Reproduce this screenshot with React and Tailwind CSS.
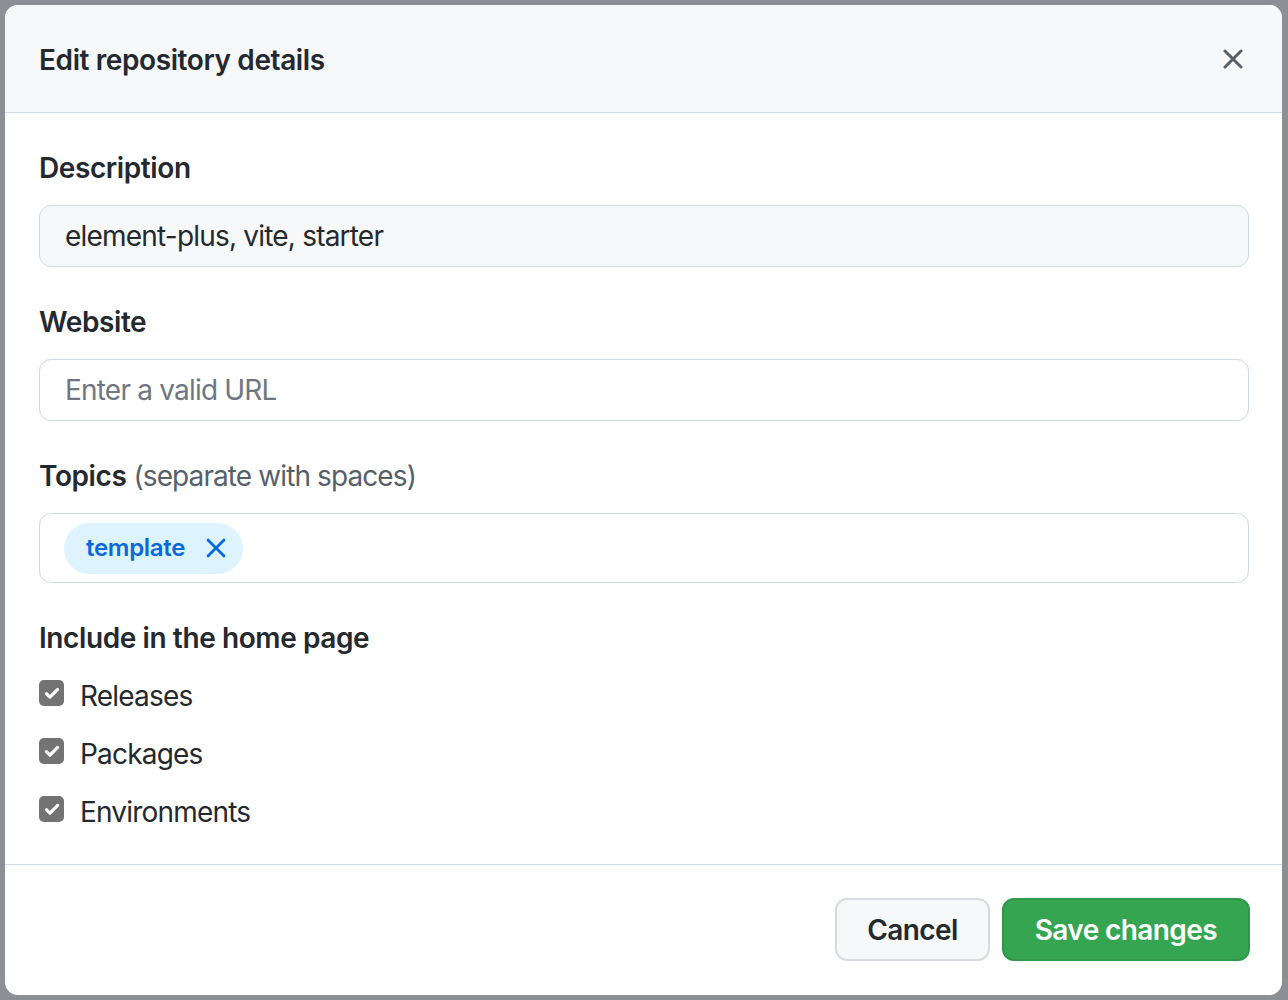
import React from "react";

const font = { fontFamily: "Inter, 'Noto Sans', sans-serif" };

function Check({ label }) {
  return (
    <label className="flex h-[42px] items-center">
      <span className="flex h-[26px] w-[25px] -translate-y-[3px] items-center justify-center rounded-[5px] bg-[#737373]">
        <svg width="18" height="18" viewBox="0 0 16 16" fill="none">
          <path d="M3 8.5l3.2 3.2L13 4.8" stroke="white" strokeWidth="2.8" strokeLinecap="round" strokeLinejoin="round" />
        </svg>
      </span>
      <span className="ml-[16px] text-[28px] tracking-[-0.8px] text-[#24292f]">{label}</span>
    </label>
  );
}

function Label({ children }) {
  return (
    <div className="flex h-[42px] items-center text-[28px] font-semibold tracking-[-0.4px] text-[#24292f]">{children}</div>
  );
}

export default function App() {
  return (
    <div className="h-[1000px] w-[1288px] overflow-hidden bg-[#8c8f93] pl-[5px] pt-[5px]" style={font}>
      <div className="flex h-[990px] w-[1277px] flex-col overflow-hidden rounded-[13px] bg-white">
        <div className="flex h-[108px] shrink-0 items-center justify-between border-b border-[#d0d7de] bg-[#f6f8fa] pl-[34px] pr-[39px]">
          <h1 className="translate-y-[1px] text-[28px] font-semibold tracking-[-0.4px] text-[#24292f]">Edit repository details</h1>
          <svg width="20" height="20" viewBox="0 0 20 20" fill="none">
            <path d="M2 2l16 16M18 2L2 18" stroke="#57606a" strokeWidth="3" strokeLinecap="round" />
          </svg>
        </div>
        <div className="flex flex-col pl-[34px] pr-[33px] pt-[34px] pb-[31px] border-b border-[#d0d7de]">
          <Label>Description</Label>
          <div className="mt-[16px] flex h-[62px] items-center rounded-[12px] border border-[#d0d7de] bg-[#f6f8fa] px-[25px] text-[28px] tracking-[-0.8px] text-[#24292f]">
            element-plus, vite, starter
          </div>
          <div className="mt-[34px]">
            <Label>Website</Label>
          </div>
          <div className="mt-[16px] flex h-[62px] items-center rounded-[12px] border border-[#d0d7de] bg-white px-[25px] text-[28px] tracking-[-0.8px] text-[#6e7781]">
            Enter a valid URL
          </div>
          <div className="mt-[34px]">
            <Label>
              Topics<span className="ml-[7px] font-normal tracking-[-0.9px] text-[#57606a]">(separate with spaces)</span>
            </Label>
          </div>
          <div className="mt-[16px] flex h-[70px] items-center rounded-[12px] border border-[#d0d7de] bg-white pl-[24px]">
            <span className="flex h-[51px] items-center rounded-full bg-[#ddf4ff] pl-[22px] pr-[17px] text-[24px] font-semibold tracking-[-0.3px] text-[#0969da]">
              template
              <svg className="ml-[21px]" width="20" height="20" viewBox="0 0 20 20" fill="none">
                <path d="M2 2l16 16M18 2L2 18" stroke="#0969da" strokeWidth="2.8" strokeLinecap="round" />
              </svg>
            </span>
          </div>
          <div className="mt-[34px]">
            <Label>Include in the home page</Label>
          </div>
          <div className="mt-[16px] flex flex-col gap-[16px]">
            <Check label="Releases" />
            <Check label="Packages" />
            <Check label="Environments" />
          </div>
        </div>
        <div className="flex flex-1 items-start justify-end gap-[12px] pr-[32px] pt-[33px]">
          <button className="flex h-[63px] items-center rounded-[12px] border-2 border-[#d8dbdf] bg-[#f6f8fa] px-[30px] text-[28px] font-semibold tracking-[-0.6px] text-[#24292f]">
            Cancel
          </button>
          <button className="flex h-[63px] items-center rounded-[12px] border-2 border-[#2e9748] bg-[#35a551] px-[31px] text-[28px] font-semibold tracking-[-0.6px] text-white">
            Save changes
          </button>
        </div>
      </div>
    </div>
  );
}
